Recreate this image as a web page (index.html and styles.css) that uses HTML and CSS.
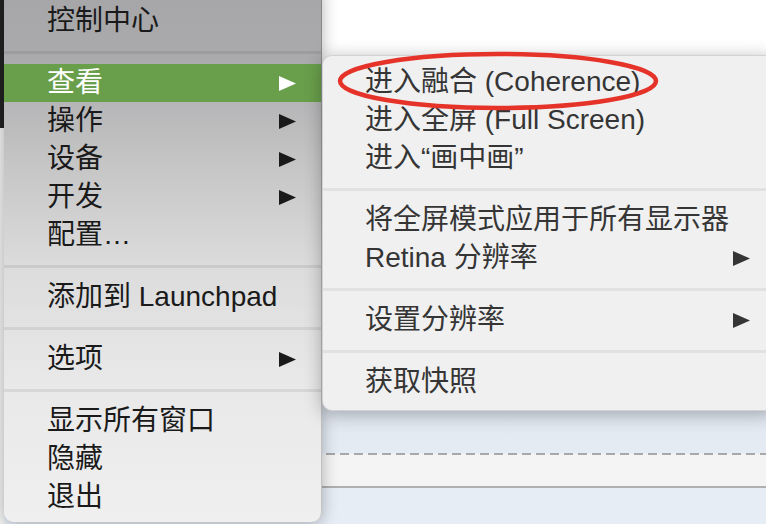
FILE: index.html
```html
<!DOCTYPE html>
<html lang="zh-CN">
<head>
<meta charset="utf-8">
<title>Menu</title>
<link rel="stylesheet" href="styles.css">
</head>
<body>
<div class="screen">
  <div class="side">
    <div class="side-dark"></div>
    <div class="side-light"></div>
  </div>
  <div class="window">
    <div class="pane"></div>
    <div class="dash"></div>
    <div class="strip"></div>
    <div class="footer"></div>
  </div>

  <div class="menu menu-main">
    <div class="item">控制中心</div>
    <div class="sep"></div>
    <div class="item active"><span>查看</span><svg class="arrow" viewBox="0 0 17 15"><polygon points="0,0 17,7.5 0,15"/></svg></div>
    <div class="item"><span>操作</span><svg class="arrow" viewBox="0 0 17 15"><polygon points="0,0 17,7.5 0,15"/></svg></div>
    <div class="item"><span>设备</span><svg class="arrow" viewBox="0 0 17 15"><polygon points="0,0 17,7.5 0,15"/></svg></div>
    <div class="item"><span>开发</span><svg class="arrow" viewBox="0 0 17 15"><polygon points="0,0 17,7.5 0,15"/></svg></div>
    <div class="item">配置…</div>
    <div class="sep"></div>
    <div class="item">添加到 Launchpad</div>
    <div class="sep"></div>
    <div class="item"><span>选项</span><svg class="arrow" viewBox="0 0 17 15"><polygon points="0,0 17,7.5 0,15"/></svg></div>
    <div class="sep"></div>
    <div class="item">显示所有窗口</div>
    <div class="item">隐藏</div>
    <div class="item">退出</div>
  </div>

  <div class="menu menu-sub">
    <div class="item">进入融合 (Coherence)</div>
    <div class="item">进入全屏 (Full Screen)</div>
    <div class="item">进入“画中画”</div>
    <div class="sep"></div>
    <div class="item">将全屏模式应用于所有显示器</div>
    <div class="item"><span>Retina 分辨率</span><svg class="arrow" viewBox="0 0 17 15"><polygon points="0,0 17,7.5 0,15"/></svg></div>
    <div class="sep"></div>
    <div class="item"><span>设置分辨率</span><svg class="arrow" viewBox="0 0 17 15"><polygon points="0,0 17,7.5 0,15"/></svg></div>
    <div class="sep"></div>
    <div class="item">获取快照</div>
  </div>

  <svg class="annot" viewBox="0 0 330 66"><ellipse cx="163" cy="33" rx="158" ry="27"/></svg>
</div>
</body>
</html>
```
FILE: styles.css
```css
* { box-sizing: border-box; }
html, body { margin: 0; padding: 0; }
body { background: #fff; }

.screen {
  position: relative;
  width: 766px;
  height: 524px;
  overflow: hidden;
  display: flex;
  font-family: "Liberation Sans", "Noto Sans CJK SC", sans-serif;
  font-size: 28px;
}

.side { width: 4px; display: flex; flex-direction: column; }
.side-dark { height: 128px; background: #222; }
.side-light { flex: 1; background: #f2f2f2; }

.window { flex: 1; display: flex; flex-direction: column; }
.pane {
  height: 453px;
  background: linear-gradient(180deg, #ffffff 0, #ffffff 300px, #e1e8f1 410px, #e4ebf3 453px);
}
.dash {
  height: 2px;
  background: repeating-linear-gradient(90deg, #a8a8a8 0 9px, #eef1f4 9px 14px);
}
.strip {
  height: 33px;
  background: #f4f4f4;
  border-bottom: 2px solid #b0b0b0;
}
.footer { flex: 1; background: #e6edf5; }

.menu { position: absolute; }

.menu-main {
  left: 4px;
  top: -12px;
  width: 318px;
  height: 534px;
  padding-top: 14px;
  border-radius: 0 0 10px 10px;
  border-right: 1px solid rgba(0, 0, 0, 0.18);
  background: linear-gradient(180deg, #a6a6a8 0, #aaaaac 70px, #c4c4c5 170px, #dcdcdc 280px, #e9e9e9 400px, #efefef 534px);
  box-shadow: 0 2px 16px rgba(0, 0, 0, 0.3);
  color: #1a1a1a;
}

.menu-sub {
  left: 322px;
  top: 55px;
  width: 454px;
  padding: 7px 0 9px;
  border-radius: 10px;
  background: #f0f0f0;
  border: 1px solid rgba(0, 0, 0, 0.12);
  box-shadow: 0 3px 18px rgba(0, 0, 0, 0.3);
  color: #353535;
}

.item {
  height: 38px;
  display: flex;
  align-items: center;
  justify-content: space-between;
  padding: 0 25px 0 43px;
  white-space: nowrap;
  line-height: 1;
}
.menu-sub .item { padding: 0 25px 0 42px; }

.item.active { background: #699f4b; color: #fff; }

.arrow { width: 17px; height: 15px; fill: currentColor; flex: none; }

.sep { height: 24px; display: flex; align-items: center; }
.sep::after {
  content: "";
  flex: 1;
  height: 3px;
  background: rgba(0, 0, 0, 0.075);
}
.menu-sub .sep::after { background: rgba(0, 0, 0, 0.06); }

.annot {
  position: absolute;
  left: 335px;
  top: 48px;
  width: 330px;
  height: 66px;
  overflow: visible;
}
.annot ellipse { fill: none; stroke: #e63329; stroke-width: 4.5; }
```
